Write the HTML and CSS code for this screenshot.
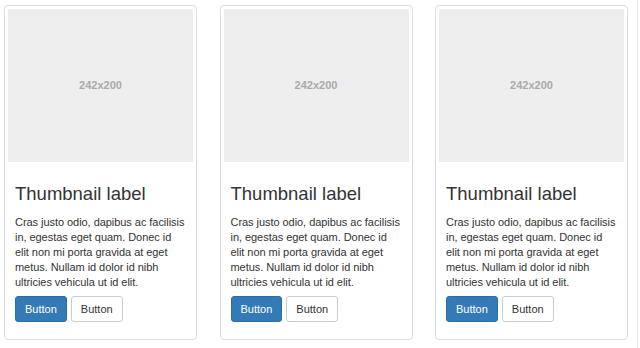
FILE: index.html
```html
<!DOCTYPE html>
<html>
<head>
<meta charset="utf-8">
<link rel="stylesheet" href="styles.css">
</head>
<body>
<div class="page">
  <div class="row">
    <div class="thumbnail">
      <div class="holder">242x200</div>
      <div class="caption">
        <h3>Thumbnail label</h3>
        <p>Cras justo odio, dapibus ac facilisis<br>in, egestas eget quam. Donec id<br>elit non mi porta gravida at eget<br>metus. Nullam id dolor id nibh<br>ultricies vehicula ut id elit.</p>
        <p class="actions"><a class="btn btn-primary">Button</a><a class="btn btn-default">Button</a></p>
      </div>
    </div>
    <div class="thumbnail">
      <div class="holder">242x200</div>
      <div class="caption">
        <h3>Thumbnail label</h3>
        <p>Cras justo odio, dapibus ac facilisis<br>in, egestas eget quam. Donec id<br>elit non mi porta gravida at eget<br>metus. Nullam id dolor id nibh<br>ultricies vehicula ut id elit.</p>
        <p class="actions"><a class="btn btn-primary">Button</a><a class="btn btn-default">Button</a></p>
      </div>
    </div>
    <div class="thumbnail">
      <div class="holder">242x200</div>
      <div class="caption">
        <h3>Thumbnail label</h3>
        <p>Cras justo odio, dapibus ac facilisis<br>in, egestas eget quam. Donec id<br>elit non mi porta gravida at eget<br>metus. Nullam id dolor id nibh<br>ultricies vehicula ut id elit.</p>
        <p class="actions"><a class="btn btn-primary">Button</a><a class="btn btn-default">Button</a></p>
      </div>
    </div>
  </div>
</div>
</body>
</html>
```
FILE: styles.css
```css
* { box-sizing: border-box; }
html, body { margin: 0; padding: 0; background: #fff; }
body {
  font-family: "Liberation Sans", Arial, sans-serif;
  font-size: 11px;
  line-height: 15px;
  color: #333;
}
.page {
  width: 638px;
  height: 348px;
  border-right: 1px solid #e6e6e6;
  padding: 5px 0 0 4px;
}
.row {
  display: flex;
  gap: 22.5px;
}
.thumbnail {
  width: 193px;
  height: 335px;
  border: 1px solid #ddd;
  border-radius: 4px;
  padding: 3px 3px;
}
.holder {
  height: 153px;
  background: #eee;
  color: #aaa;
  font-weight: bold;
  font-size: 11px;
  display: flex;
  align-items: center;
  justify-content: center;
}
.caption {
  padding: 0 3px 0 7px;
}
h3 {
  font-size: 18.5px;
  font-weight: normal;
  line-height: 22px;
  margin: 21px 0 10px;
  color: #333;
}
p {
  margin: 0 0 6px;
  letter-spacing: -0.05px;
  white-space: nowrap;
}
.actions {
  display: flex;
  gap: 4px;
  letter-spacing: 0;
}
.btn {
  display: inline-block;
  height: 26px;
  line-height: 24px;
  padding: 0 9px;
  border: 1px solid #ccc;
  border-radius: 3px;
  font-size: 11px;
  color: #333;
  background: #fff;
}
.btn-primary {
  background: #337ab7;
  border-color: #2e6da4;
  color: #fff;
}
```
